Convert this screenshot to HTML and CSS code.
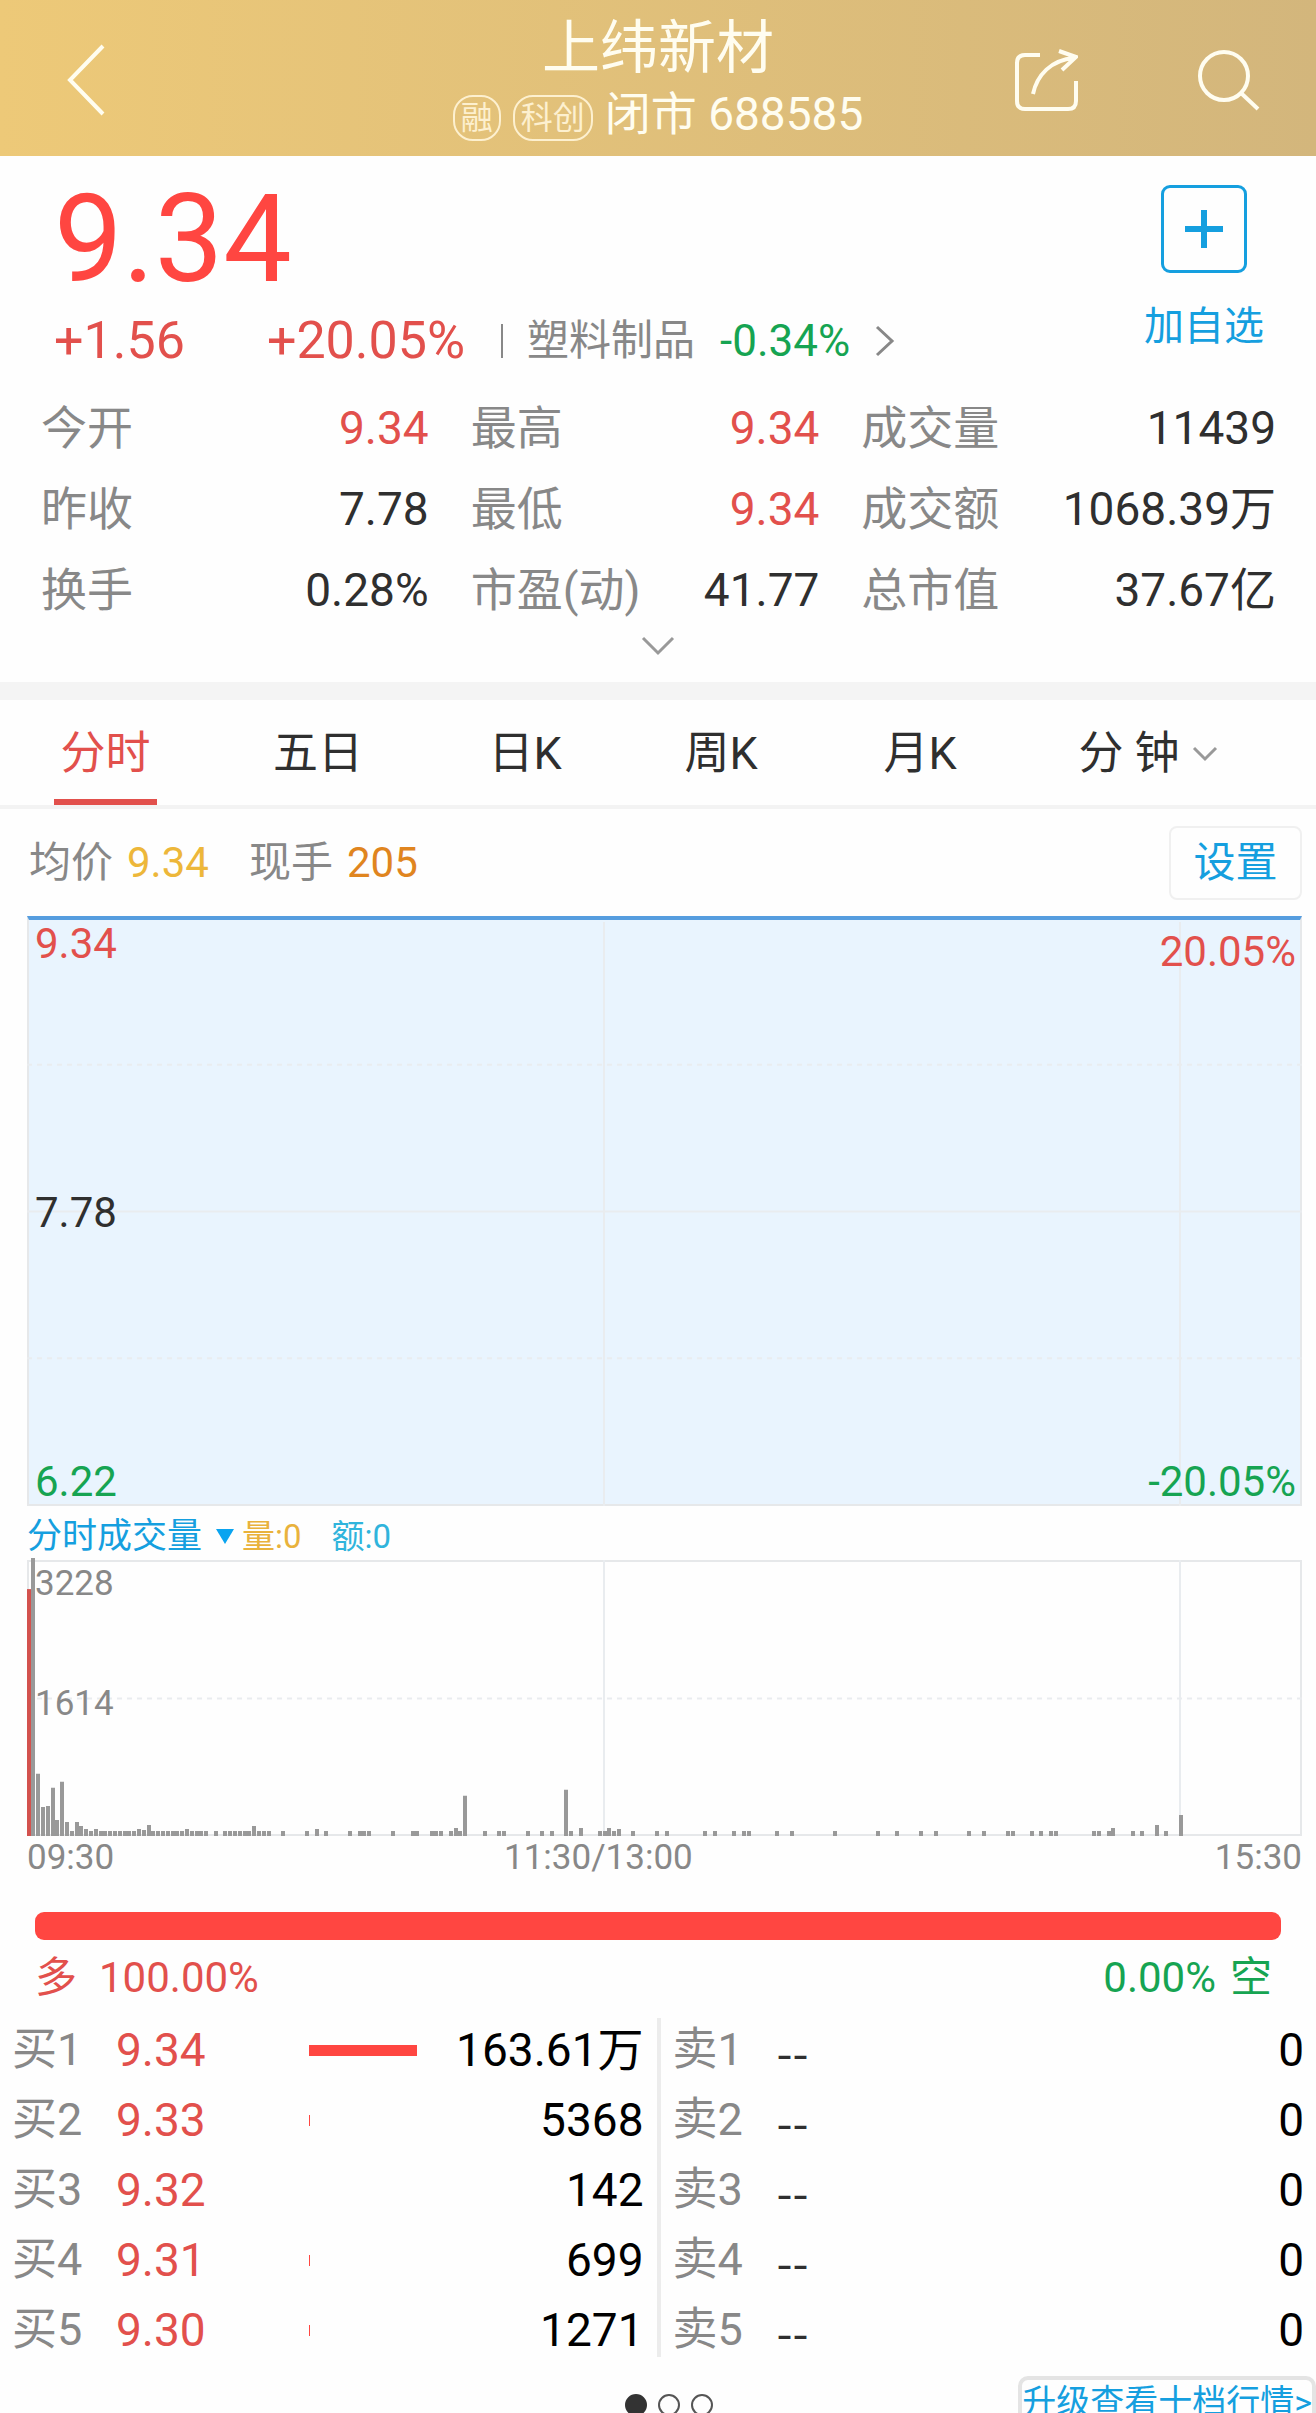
FILE: index.html
```html
<!DOCTYPE html>
<html lang="zh-CN">
<head>
<meta charset="utf-8">
<meta name="viewport" content="width=device-width, initial-scale=1">
<title>上纬新材 688585</title>
<link rel="stylesheet" href="styles.css">
</head>
<body>
<div class="screen">
  <header class="topbar">
    <button class="icon-btn back" type="button" aria-label="返回">
      <svg width="40" height="72" viewBox="0 0 40 72"><path d="M37 2 4 36l33 34"/></svg>
    </button>
    <div class="heading">
      <h1>上纬新材</h1>
      <p class="subtitle"><span class="tag">融</span><span class="tag">科创</span><span>闭市 688585</span></p>
    </div>
    <div class="actions">
      <button class="icon-btn" type="button" aria-label="分享">
        <svg width="64" height="66" viewBox="0 0 64 66"><path d="M26 8H11q-8 0-8 8v38q0 8 8 8h43q8 0 8-8V34M19 47C23 28 37 13 60 11M45 4l17 6-14 13"/></svg>
      </button>
      <button class="icon-btn" type="button" aria-label="搜索">
        <svg width="64" height="66" viewBox="0 0 64 66"><circle cx="28" cy="29" r="24"/><path d="m45 46 17 16"/></svg>
      </button>
    </div>
  </header>

  <section class="quote">
    <div class="quote-top">
      <div class="quote-main">
        <div class="price">9.34</div>
        <div class="change">
          <span class="delta">+1.56</span>
          <span class="delta pct">+20.05%</span>
          <a class="sector" href="#sector">
            <span>塑料制品</span><span class="down">-0.34%</span>
            <svg width="20" height="32" viewBox="0 0 20 32"><path d="m2 2 15 14L2 30"/></svg>
          </a>
        </div>
      </div>
      <button class="add" type="button">
        <span class="plus"><svg width="38" height="38" viewBox="0 0 38 38"><path d="M19 0v38M0 19h38"/></svg></span>
        <span>加自选</span>
      </button>
    </div>
    <dl class="stats">
      <div><dt>今开</dt><dd class="up">9.34</dd></div>
      <div><dt>最高</dt><dd class="up">9.34</dd></div>
      <div><dt>成交量</dt><dd>11439</dd></div>
      <div><dt>昨收</dt><dd>7.78</dd></div>
      <div><dt>最低</dt><dd class="up">9.34</dd></div>
      <div><dt>成交额</dt><dd>1068.39万</dd></div>
      <div><dt>换手</dt><dd>0.28%</dd></div>
      <div><dt>市盈(动)</dt><dd>41.77</dd></div>
      <div><dt>总市值</dt><dd>37.67亿</dd></div>
    </dl>
    <button class="expand" type="button" aria-label="展开">
      <svg width="34" height="20" viewBox="0 0 34 20"><path d="m2 2 15 15L32 2"/></svg>
    </button>
  </section>

  <nav class="tabs">
    <button class="tab active" type="button">分时</button>
    <button class="tab" type="button">五日</button>
    <button class="tab" type="button">日K</button>
    <button class="tab" type="button">周K</button>
    <button class="tab" type="button">月K</button>
    <button class="tab" type="button">分 钟<svg width="26" height="16" viewBox="0 0 26 16"><path d="m2 2 11 11L24 2"/></svg></button>
  </nav>

  <section class="charts">
    <div class="info">
      <span>均价</span><span class="avg">9.34</span>
      <span class="hand">现手</span><span class="lots">205</span>
      <button class="settings" type="button">设置</button>
    </div>
    <div class="plot price-plot">
      <svg class="canvas" viewBox="0 0 1275 589" preserveAspectRatio="none">
        <path class="grid" d="M577 4v585M1153 4v585M0 294h1275"/>
        <path class="grid dash" d="M0 147h1275M0 441h1275"/>
      </svg>
      <div class="scale"><span class="up">9.34</span><span>7.78</span><span class="down">6.22</span></div>
      <div class="scale right"><span class="up">20.05%</span><span class="down">-20.05%</span></div>
    </div>
    <div class="legend">
      <button class="metric" type="button">分时成交量<svg width="18" height="15" viewBox="0 0 18 15"><path d="M0 0h18L9 15z"/></svg></button>
      <span class="vol">量:0</span><span class="amt">额:0</span>
    </div>
    <div class="plot volume-plot">
      <svg class="canvas" viewBox="0 0 1275 275" preserveAspectRatio="none">
        <path class="grid" d="M577 0v275M1153 0v275"/>
        <path class="grid dash" d="M0 138h1275"/>
        <path class="bar-up" d="M2 275v-246"/>
        <path class="bars" d="M6 275v-277M11 275v-62M16 275v-29M21 275v-30M26 275v-48M30 275v-16M35 275v-54M40 275v-14M45 275v-5M50 275v-14M54 275v-10M59 275v-7M64 275v-5M69 275v-7M74 275v-5M78 275v-5M83 275v-5M88 275v-5M93 275v-5M98 275v-5M102 275v-5M107 275v-5M112 275v-7M117 275v-6M122 275v-11M126 275v-5M131 275v-5M136 275v-5M141 275v-5M146 275v-5M150 275v-5M155 275v-5M160 275v-7M165 275v-5M170 275v-5M174 275v-5M179 275v-5M189 275v-5M198 275v-5M203 275v-5M208 275v-5M213 275v-5M218 275v-5M222 275v-5M227 275v-10M232 275v-5M237 275v-5M242 275v-5M256 275v-5M280 275v-5M290 275v-7M299 275v-5M323 275v-5M333 275v-5M337 275v-5M342 275v-5M366 275v-5M386 275v-5M390 275v-5M405 275v-5M409 275v-5M414 275v-5M424 275v-5M429 275v-8M433 275v-5M438 275v-40M458 275v-5M472 275v-5M477 275v-5M501 275v-5M515 275v-5M525 275v-5M539 275v-46M544 275v-5M554 275v-8M573 275v-5M578 275v-5M582 275v-8M587 275v-5M592 275v-7M606 275v-5M630 275v-5M640 275v-5M678 275v-5M688 275v-5M707 275v-5M717 275v-5M722 275v-5M750 275v-5M765 275v-5M808 275v-5M851 275v-5M870 275v-5M894 275v-5M909 275v-5M942 275v-5M957 275v-5M981 275v-5M986 275v-5M1005 275v-5M1014 275v-5M1024 275v-5M1029 275v-5M1067 275v-5M1072 275v-5M1082 275v-5M1086 275v-8M1106 275v-5M1115 275v-5M1130 275v-11M1139 275v-5M1154 275v-21"/>
      </svg>
      <div class="scale"><span>3228</span><span>1614</span></div>
    </div>
    <div class="times"><span>09:30</span><span>11:30/13:00</span><span>15:30</span></div>
  </section>

  <section class="ratio">
    <div class="ratio-bar"></div>
    <div class="ratio-text">
      <div class="long"><span>多</span><span>100.00%</span></div>
      <div class="short"><span>0.00%</span><span>空</span></div>
    </div>
  </section>

  <section class="book">
    <div class="side buy">
      <table>
        <tr><th scope="row">买1</th><td class="bid">9.34</td><td class="depth"><i style="width:108px"></i></td><td class="qty">163.61万</td></tr>
        <tr><th scope="row">买2</th><td class="bid">9.33</td><td class="depth"><i style="width:1px"></i></td><td class="qty">5368</td></tr>
        <tr><th scope="row">买3</th><td class="bid">9.32</td><td class="depth"></td><td class="qty">142</td></tr>
        <tr><th scope="row">买4</th><td class="bid">9.31</td><td class="depth"><i style="width:1px"></i></td><td class="qty">699</td></tr>
        <tr><th scope="row">买5</th><td class="bid">9.30</td><td class="depth"><i style="width:1px"></i></td><td class="qty">1271</td></tr>
      </table>
    </div>
    <div class="divider"></div>
    <div class="side sell">
      <table>
        <tr><th scope="row">卖1</th><td class="ask">--</td><td class="qty">0</td></tr>
        <tr><th scope="row">卖2</th><td class="ask">--</td><td class="qty">0</td></tr>
        <tr><th scope="row">卖3</th><td class="ask">--</td><td class="qty">0</td></tr>
        <tr><th scope="row">卖4</th><td class="ask">--</td><td class="qty">0</td></tr>
        <tr><th scope="row">卖5</th><td class="ask">--</td><td class="qty">0</td></tr>
      </table>
    </div>
  </section>

  <footer class="pager">
    <div class="dots"><i class="on"></i><i></i><i></i></div>
    <a class="upgrade" href="#level2">升级查看十档行情&gt;</a>
  </footer>
</div>
</body>
</html>
```
FILE: styles.css
```css
:root {
  --red: #e2504c;
  --bright-red: #ff4641;
  --green: #16a452;
  --blue: #159fdf;
  --gray: #888;
  --ink: #2f2f2f;
  --rule: #f3f3f3;
}

* { box-sizing: border-box; }

body {
  margin: 0;
  background: #fefefe;
  color: var(--ink);
  font-family: Roboto, "Noto Sans CJK SC", sans-serif;
  font-size: 46px;
  line-height: 1;
}

button {
  padding: 0;
  border: 0;
  background: none;
  color: inherit;
  font: inherit;
}

a { text-decoration: none; }
h1, p, dl, dd { margin: 0; }

svg {
  display: block;
  flex: none;
  fill: none;
  stroke: currentColor;
  stroke-width: 4;
}

.screen {
  height: 100vh;
  overflow: hidden;
}

.up { color: var(--red); }
.down { color: var(--green); }

/* Header */
.topbar {
  display: grid;
  grid-template-columns: 1fr auto 1fr;
  height: 156px;
  padding: 4px 56px 0;
  background: linear-gradient(90deg, #edc978, #d3b67c);
  color: #fffdf0;
}

.icon-btn { align-self: center; }
.back { justify-self: start; margin-left: 10px; }

.heading { text-align: center; }

h1 {
  padding-top: 14px;
  font-size: 58px;
  font-weight: 400;
  line-height: 60px;
}

.subtitle {
  display: flex;
  align-items: center;
  gap: 12px;
  line-height: 72px;
  white-space: nowrap;
}

.tag {
  height: 46px;
  margin-top: 8px;
  padding: 0 6px;
  border: 2px solid #fdf0cf;
  border-radius: 20px;
  color: #fdf0cf;
  font-size: 32px;
  line-height: 42px;
}

.actions {
  display: flex;
  justify-content: flex-end;
  gap: 118px;
}

/* Quote summary */
.quote {
  height: 544px;
  border-bottom: 18px solid #f4f4f4;
}

.quote-top {
  display: flex;
  justify-content: space-between;
  padding: 29px 52px 0 54px;
}

.price {
  color: var(--bright-red);
  font-size: 122px;
  line-height: 110px;
}

.change {
  display: flex;
  align-items: center;
  padding-top: 16px;
  line-height: 60px;
}

.delta {
  color: var(--red);
  font-size: 52px;
}

.pct { margin-left: 82px; }

.sector {
  display: flex;
  align-items: center;
  margin-left: 36px;
  color: var(--gray);
  font-size: 42px;
}

.sector::before {
  width: 2px;
  height: 34px;
  margin-right: 24px;
  background: currentColor;
  content: "";
}

.sector .down { margin: 0 25px; font-size: 44px; }
.sector svg { stroke-width: 3; }

.add {
  display: flex;
  flex-direction: column;
  align-items: center;
  gap: 34px;
  color: var(--blue);
  font-size: 40px;
}

.plus {
  display: grid;
  place-items: center;
  width: 86px;
  height: 88px;
  border: 3px solid currentColor;
  border-radius: 9px;
}

.plus svg { stroke-width: 6; }

.stats {
  display: grid;
  grid-template-columns: 388fr 349fr 415fr;
  column-gap: 42px;
  padding: 17px 40px 0 41px;
  line-height: 81px;
}

.stats div {
  display: flex;
  justify-content: space-between;
  white-space: nowrap;
}

dt { color: var(--gray); }

.expand {
  display: block;
  margin: 5px auto 0;
  color: #999;
}

.expand svg { stroke-width: 3; }

/* Period tabs */
.tabs {
  display: grid;
  grid-template-columns: 212fr 212fr 202fr 190fr 208fr 248fr;
  height: 109px;
  padding-right: 44px;
  border-bottom: 4px solid var(--rule);
  font-size: 45px;
}

.tab {
  display: flex;
  justify-content: center;
  align-items: center;
  gap: 12px;
  padding-top: 8px;
  border-bottom: 6px solid transparent;
  line-height: 91px;
}

.tab.active {
  margin: 0 55px 0 54px;
  border-color: var(--red);
  color: var(--red);
}

.tab svg { color: #999; stroke-width: 3; }

/* Charts */
.charts { padding: 17px 14px 0 27px; }

.info {
  display: flex;
  align-items: center;
  gap: 14px;
  height: 74px;
  padding-left: 2px;
  color: var(--gray);
  font-size: 42px;
}

.avg { color: #edb73a; }
.hand { margin-left: 26px; }
.lots { color: #e0851f; }

.settings {
  width: 133px;
  height: 74px;
  margin-left: auto;
  border: 2px solid #f0f0f0;
  border-radius: 8px;
  color: var(--blue);
}

.plot {
  position: relative;
  border: 2px solid #e6e8ea;
}

.price-plot {
  height: 590px;
  margin-top: 16px;
  border-top: 4px solid #559ddf;
  background: #e9f4fe;
  font-size: 42px;
}

.volume-plot {
  height: 276px;
  color: var(--gray);
  font-size: 35px;
}

/* Drawn over the frame, so its edges line up with the border */
.canvas {
  position: absolute;
  inset: -2px;
  width: calc(100% + 4px);
  height: calc(100% + 4px);
  overflow: visible;
}

.grid { stroke: #e9ecef; stroke-width: 2; }
.dash { stroke-dasharray: 5 5; }
.bars { stroke: #999; }
.bar-up { stroke: #d3524e; }

.scale {
  position: absolute;
  inset: 0 4px 0 6px;
  display: flex;
  flex-direction: column;
  justify-content: space-between;
  padding-top: 2px;
  line-height: 44px;
}

.right { align-items: flex-end; padding-top: 10px; }

.volume-plot .scale {
  justify-content: flex-start;
  gap: 76px;
  padding-top: 0;
}

.legend {
  display: flex;
  align-items: center;
  height: 54px;
  padding-top: 6px;
  font-size: 33px;
}

.metric {
  display: flex;
  align-items: center;
  gap: 14px;
  margin-right: 8px;
  color: var(--blue);
  font-size: 35px;
}

.metric svg { fill: #0aa4f0; stroke: none; }
.vol { margin-right: 30px; color: #e9b23c; }
.amt { color: #30b4dc; }

.times {
  display: grid;
  grid-template-columns: 477fr 500fr 298fr;
  color: var(--gray);
  font-size: 35px;
  line-height: 44px;
}

.times span:last-child { text-align: right; }

/* Buy/sell ratio */
.ratio { padding: 32px 35px 0; }

.ratio-bar {
  height: 28px;
  border-radius: 9px;
  background: var(--bright-red);
}

.ratio-text {
  display: flex;
  justify-content: space-between;
  padding: 16px 9px 0 0;
  font-size: 42px;
  line-height: 44px;
}

.long, .short { display: flex; }
.long { gap: 22px; color: var(--red); }
.short { gap: 14px; color: var(--green); }

/* Order book */
.book {
  display: flex;
  padding-top: 15px;
}

.divider {
  width: 4px;
  margin: 3px 0 8px;
  background: #ececec;
}

.side { flex: 1 1 0; }
.buy { padding: 0 13px 0 12px; }
.sell { padding: 0 12px; }

table {
  width: 100%;
  border-spacing: 0;
  table-layout: fixed;
  line-height: 70px;
}

th, td {
  height: 70px;
  padding: 0;
  text-align: left;
}

th {
  width: 104px;
  color: var(--gray);
  font-size: 45px;
  font-weight: 400;
}

.bid { width: 193px; color: var(--red); }
.ask { font-family: "Noto Sans CJK SC", sans-serif; }
.depth { width: 110px; }

.depth i {
  display: block;
  height: 11px;
  background: var(--bright-red);
}

.qty { color: #000; text-align: right; white-space: nowrap; }

/* Pager */
.pager {
  display: grid;
  grid-template-columns: 1fr auto 1fr;
  padding-top: 11px;
}

.dots {
  display: flex;
  grid-column: 2;
  gap: 11px;
  padding: 18px 0 0 22px;
}

.dots i {
  width: 22px;
  height: 22px;
  border: 2px solid #555;
  border-radius: 50%;
}

.dots .on { background: #333; border-color: #333; }

.upgrade {
  justify-self: end;
  height: 52px;
  border: 4px solid #e4e4e4;
  border-radius: 10px;
  color: var(--blue);
  font-size: 34px;
  line-height: 44px;
  white-space: nowrap;
}
```
